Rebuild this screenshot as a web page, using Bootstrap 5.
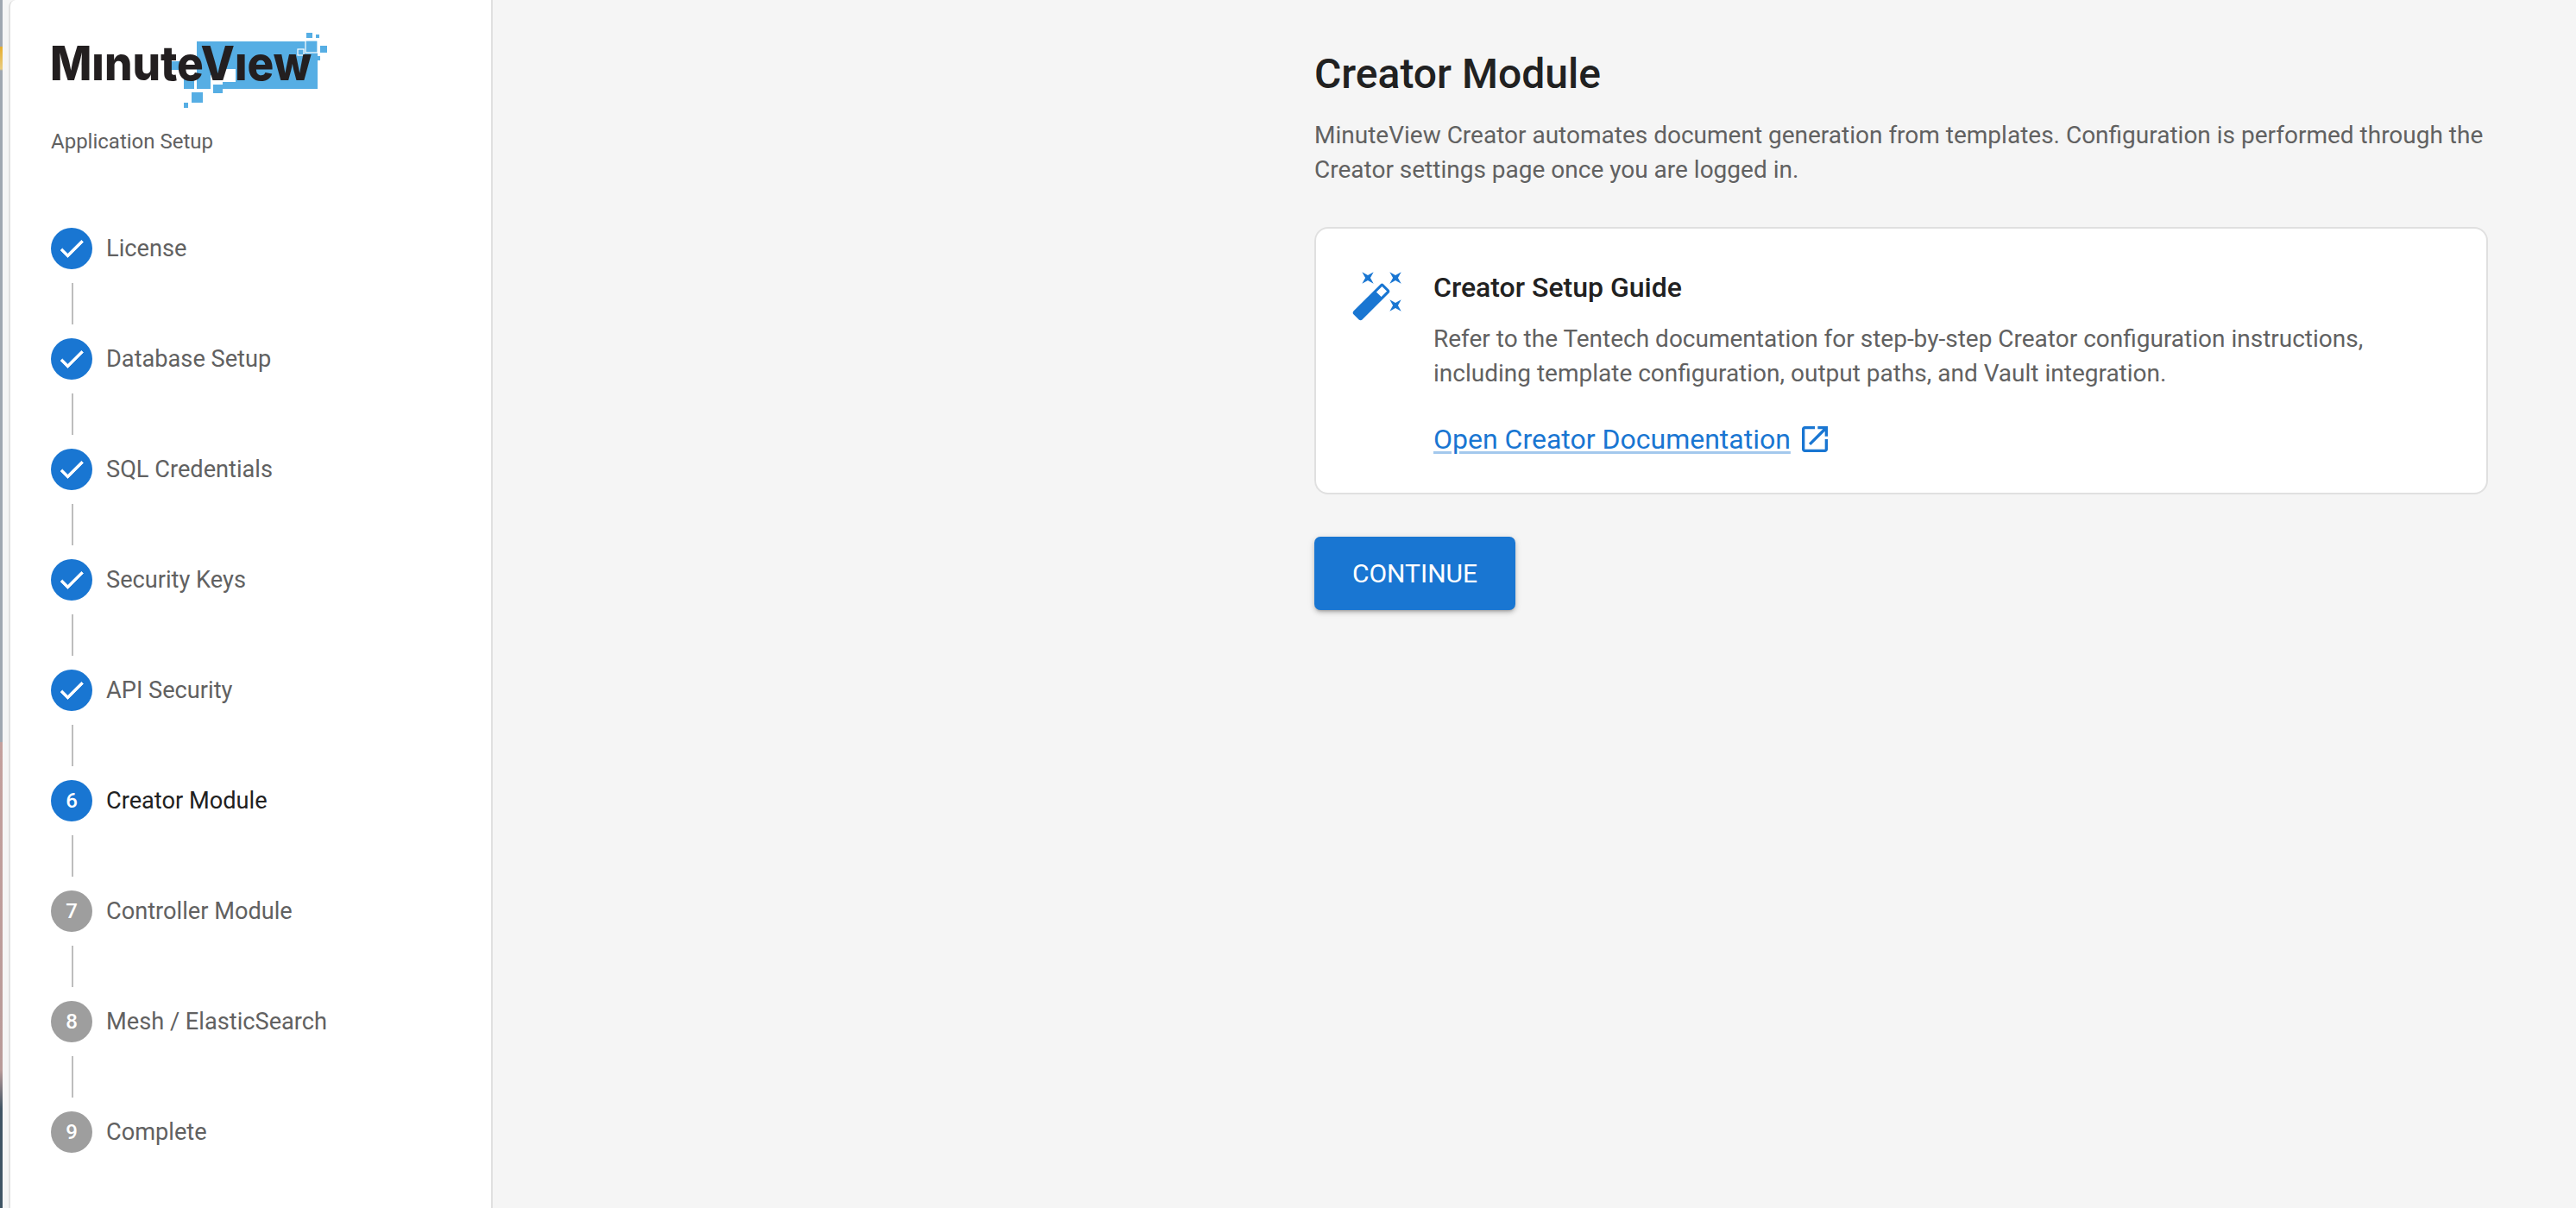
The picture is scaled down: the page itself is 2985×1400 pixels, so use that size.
<!DOCTYPE html>
<html lang="en"><head><meta charset="utf-8"><title>Application Setup</title>
<link href="https://cdn.jsdelivr.net/npm/bootstrap@5.3.0/dist/css/bootstrap.min.css" rel="stylesheet">
<style>
html,body{height:100%}
body{background:#f5f5f5;font-family:Roboto,"Liberation Sans",sans-serif;color:#616161;overflow:hidden}
.shell{height:1400px}
.edge-strip{width:3px;background:linear-gradient(#9fa7b0 0,#9fa7b0 54px,#e6ad2c 54px,#e8cc80 80px,#9fa7b0 82px,#9fa7b0 860px,#c39f9c 860px,#b89a98 1240px,#3f5464 1285px,#3f5464 100%)}
.edge-gap{width:7px}
.side-panel{width:561px;background:#fff;border-left:2px solid #e0e0e0;border-right:2px solid #e0e0e0;border-top-left-radius:8px;padding:0 0 0 47px}
.logo-svg{display:block;margin-left:-29px;margin-top:30px;width:360px;height:100px}
.side-sub{font-size:24px;line-height:36px;margin-top:16px;margin-bottom:0;color:#616161}
.stepper{margin-top:82px}
.step-row{height:48px;gap:16px;font-size:27.2px;line-height:48px}
.step-dot{width:48px;height:48px;border-radius:50%;font-size:24px;font-weight:500;color:#fff;background:#9e9e9e}
.step-dot.on{background:#1976d2}
.step-dot svg{fill:#fff;stroke:#fff;stroke-width:.5}
.step-line{width:2px;height:48px;margin:16px 0 16px 24px;background:#bdbdbd}
.step-now{color:#212121}
.main-pane{padding:0 102px 0 0}
.content-col{width:1360px;padding-top:57px}
.page-title{font-size:48px;line-height:58px;font-weight:500;color:#212121;margin:0}
.lead-copy{font-size:28px;line-height:40px;margin:22px 0 0;color:#616161}
.guide-box{margin-top:46px;height:310px;background:#fff;border:2px solid #e0e0e0;border-radius:16px;padding:45px 40px;gap:32px}
.wand{width:64px;height:64px;flex:none;fill:#1976d2}
.guide-title{font-size:32px;line-height:44px;font-weight:500;color:#212121;margin:1px 0 0}
.guide-copy{font-size:28px;line-height:40px;margin:18px 0 0;color:#616161}
.guide-link-row{margin-top:36px;gap:14px}
.guide-link{font-size:32px;line-height:40px;color:#1976d2;text-decoration-color:rgba(25,118,210,.4);text-underline-offset:3px}
.ext-ico{width:40px;height:40px;fill:#1976d2;margin:0 -6px}
.cta{margin-top:49px;width:233px;height:85px;background:#1976d2;border:0;border-radius:7px;color:#fff;font-size:30px;font-weight:400;box-shadow:0 3px 3px -2px rgba(0,0,0,.2),0 3px 5px 0 rgba(0,0,0,.14),0 2px 8px 0 rgba(0,0,0,.12)}
.cta:hover{background:#1565c0;color:#fff}
</style></head>
<body>
<div class="shell d-flex">
  <div class="edge-strip"></div>
  <div class="edge-gap"></div>
  <aside class="side-panel flex-shrink-0">
    <svg class="logo-svg" viewBox="30 30 360 100" role="img" aria-label="MinuteView">
      <g fill="#56aee4">
        <path d="M228 48H368V103H258V87H228Z"/>
        <rect x="198" y="71" width="10" height="10"/><rect x="213" y="92" width="12" height="11"/><rect x="228" y="87" width="16" height="16"/><rect x="247" y="98" width="11" height="10"/><rect x="222" y="107" width="13" height="12"/><rect x="213" y="119" width="5" height="6"/>
        <rect x="355" y="38" width="7" height="6"/><rect x="366" y="40" width="4" height="4"/><rect x="371" y="53" width="8" height="8"/><rect x="366" y="65" width="5" height="5"/>
      </g>
      <rect x="258" y="80" width="15" height="15" fill="#fff"/>
      <g fill="#56aee4" stroke="#fff" stroke-width="1.2"><rect x="354" y="47" width="14" height="14"/><rect x="345" y="57" width="7" height="7"/></g>
      <text x="58" y="93" textLength="303" lengthAdjust="spacingAndGlyphs" font-family="Inter,sans-serif" font-weight="800" font-size="55" fill="#231f20">MınuteVıew</text>
    </svg>
    <p class="side-sub">Application Setup</p>
    <div class="stepper">
      <div class="step-row d-flex"><span class="step-dot on d-flex align-items-center justify-content-center"><svg width="36" height="36" viewBox="0 0 24 24"><path d="M9 16.17 4.83 12l-1.42 1.41L9 19 21 7l-1.41-1.41z"/></svg></span><span>License</span></div><div class="step-line"></div>
      <div class="step-row d-flex"><span class="step-dot on d-flex align-items-center justify-content-center"><svg width="36" height="36" viewBox="0 0 24 24"><path d="M9 16.17 4.83 12l-1.42 1.41L9 19 21 7l-1.41-1.41z"/></svg></span><span>Database Setup</span></div><div class="step-line"></div>
      <div class="step-row d-flex"><span class="step-dot on d-flex align-items-center justify-content-center"><svg width="36" height="36" viewBox="0 0 24 24"><path d="M9 16.17 4.83 12l-1.42 1.41L9 19 21 7l-1.41-1.41z"/></svg></span><span>SQL Credentials</span></div><div class="step-line"></div>
      <div class="step-row d-flex"><span class="step-dot on d-flex align-items-center justify-content-center"><svg width="36" height="36" viewBox="0 0 24 24"><path d="M9 16.17 4.83 12l-1.42 1.41L9 19 21 7l-1.41-1.41z"/></svg></span><span>Security Keys</span></div><div class="step-line"></div>
      <div class="step-row d-flex"><span class="step-dot on d-flex align-items-center justify-content-center"><svg width="36" height="36" viewBox="0 0 24 24"><path d="M9 16.17 4.83 12l-1.42 1.41L9 19 21 7l-1.41-1.41z"/></svg></span><span>API Security</span></div><div class="step-line"></div>
      <div class="step-row d-flex"><span class="step-dot on d-flex align-items-center justify-content-center">6</span><span class="step-now">Creator Module</span></div><div class="step-line"></div>
      <div class="step-row d-flex"><span class="step-dot d-flex align-items-center justify-content-center">7</span><span>Controller Module</span></div><div class="step-line"></div>
      <div class="step-row d-flex"><span class="step-dot d-flex align-items-center justify-content-center">8</span><span>Mesh / ElasticSearch</span></div><div class="step-line"></div>
      <div class="step-row d-flex"><span class="step-dot d-flex align-items-center justify-content-center">9</span><span>Complete</span></div>
    </div>
  </aside>
  <main class="main-pane flex-grow-1 d-flex justify-content-end">
    <div class="content-col">
      <h1 class="page-title">Creator Module</h1>
      <p class="lead-copy">MinuteView Creator automates document generation from templates. Configuration is performed through the Creator settings page once you are logged in.</p>
      <div class="guide-box d-flex">
        <svg class="wand" viewBox="0 0 24 24"><path d="M7.5 5.6 10 7 8.6 4.5 10 2 7.5 3.4 5 2l1.4 2.5L5 7zm12 9.8L17 14l1.4 2.5L17 19l2.5-1.4L22 19l-1.4-2.5L22 14zM22 2l-2.5 1.4L17 2l1.4 2.5L17 7l2.5-1.4L22 7l-1.4-2.5zm-7.63 5.29a.9959.9959 0 0 0-1.41 0L1.29 18.96c-.39.39-.39 1.02 0 1.41l2.34 2.34c.39.39 1.02.39 1.41 0L16.7 11.05c.39-.39.39-1.02 0-1.41l-2.33-2.35zm-1.03 5.49-2.12-2.12 2.44-2.44 2.12 2.12-2.44 2.44z"/></svg>
        <div>
          <h2 class="guide-title">Creator Setup Guide</h2>
          <p class="guide-copy">Refer to the Tentech documentation for step-by-step Creator configuration instructions, including template configuration, output paths, and Vault integration.</p>
          <div class="guide-link-row d-flex align-items-center"><a class="guide-link" href="#">Open Creator Documentation</a><svg class="ext-ico" viewBox="0 0 24 24"><path d="M19 19H5V5h7V3H5c-1.11 0-2 .9-2 2v14c0 1.1.89 2 2 2h14c1.1 0 2-.9 2-2v-7h-2zM14 3v2h3.59l-9.83 9.83 1.41 1.41L19 6.41V10h2V3z"/></svg></div>
        </div>
      </div>
      <button class="btn cta" type="button">CONTINUE</button>
    </div>
  </main>
</div>
<script src="https://cdn.jsdelivr.net/npm/bootstrap@5.3.0/dist/js/bootstrap.bundle.min.js"></script>
</body></html>
